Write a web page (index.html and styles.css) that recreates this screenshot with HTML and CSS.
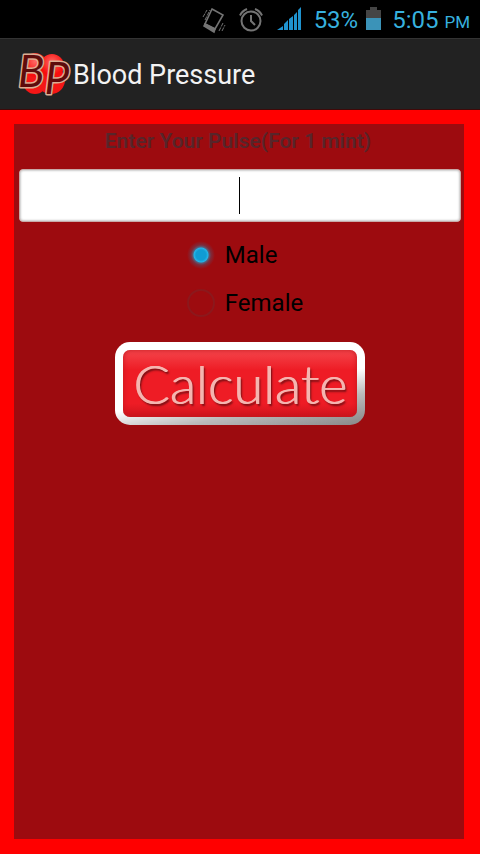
FILE: index.html
```html
<!DOCTYPE html>
<html lang="en">
<head>
  <meta charset="UTF-8">
  <meta name="viewport" content="width=device-width, initial-scale=1.0">
  <title>Blood Pressure</title>
  <link rel="stylesheet" href="styles.css">
</head>
<body>
  <div class="status-bar">
    <svg class="vibrate" width="24" height="28" viewBox="0 0 24 28" fill="none" stroke="#747474" stroke-width="1.6">
      <path d="M10 3 21 9 13 23 3 18z"/>
      <path d="M3 18 13 23 12 26 2 20z" fill="#747474"/>
      <path d="M1 11 5 4M3 14 8 4M17 25 21 17M20 25 23 19" stroke-width="1" stroke-dasharray="4 1"/>
    </svg>
    <svg class="alarm" width="26" height="26" viewBox="0 0 26 26" fill="none" stroke="#747474" stroke-width="2">
      <circle cx="13" cy="14" r="9.500"/>
      <path d="M13 8v6l4 4"/>
      <path d="M2 8.500Q4 4 9 2M17 2q5 2 7 6.500"/>
    </svg>
    <svg class="signal" width="24" height="24" viewBox="0 0 24 24" fill="#1f93cf">
      <path d="M0 23l6-4v4zM7 23v-6l4-4v10zM12 23V12l4-3v14zM17 23V8l3-3v18zM21 23V3l3-3v23z"/>
    </svg>
    <span class="percent">53%</span>
    <svg class="battery" width="16" height="24" viewBox="0 0 16 24">
      <path d="M0 3h4V0h7v3h4v9H0z" fill="#454545"/>
      <path d="M0 11h15v12H0z" fill="#3b93b8"/>
    </svg>
    <span class="time">5:05 <small>PM</small></span>
  </div>

  <header class="action-bar">
    <svg class="logo" width="50" height="50" viewBox="0 0 50 50">
      <defs>
        <radialGradient id="drop" cx="50%" cy="35%">
          <stop offset="0" stop-color="#ff6a64"/>
          <stop offset="1" stop-color="#f80e0e"/>
        </radialGradient>
      </defs>
      <circle cx="17" cy="32" r="12" fill="#f51616"/>
      <circle cx="33" cy="30" r="14" fill="#f51616"/>
      <circle cx="17" cy="15" r="12" fill="url(#drop)"/>
      <circle cx="34" cy="16" r="12" fill="url(#drop)"/>
      <text class="logo-text" x="0" y="37">B<tspan dy="7">P</tspan></text>
    </svg>
    <h1>Blood Pressure</h1>
  </header>

  <main>
    <form class="panel">
      <label class="title" for="pulse">Enter Your Pulse(For 1 mint)</label>
      <div class="field">
        <input type="text" id="pulse" name="pulse" inputmode="numeric">
        <span class="caret"></span>
      </div>
      <div class="options">
        <label><input type="radio" name="gender" value="male" checked>Male</label>
        <label><input type="radio" name="gender" value="female">Female</label>
      </div>
      <button type="button">Calculate</button>
    </form>
  </main>
</body>
</html>
```
FILE: styles.css
```css
* {
  margin: 0;
  padding: 0;
  box-sizing: border-box;
}

body {
  display: flex;
  flex-direction: column;
  min-height: 100vh;
  background: #f00;
  font-family: Roboto, sans-serif;
}

.status-bar {
  display: flex;
  align-items: center;
  justify-content: flex-end;
  height: 38px;
  padding: 2px 10px 0 0;
  background: #000;
  color: #37b1df;
  font-size: 24px;
}

.alarm {
  margin-left: 12px;
}

.signal {
  margin: 0 13px 2px;
}

.battery {
  margin: 0 10px 2px 8px;
}

.time small {
  font-size: 17px;
}

.action-bar {
  display: flex;
  align-items: center;
  height: 72px;
  padding: 2px 0 0 18px;
  gap: 5px;
  background: #222;
  border-top: 1px solid #333;
  border-bottom: 1px solid #400808;
}

.action-bar h1 {
  color: #f3f3f3;
  font-size: 27px;
  font-weight: 400;
}

.logo {
  overflow: visible;
}

.logo-text {
  fill: #5e0b0b;
  stroke: #dcae94;
  stroke-width: 3px;
  stroke-linejoin: round;
  paint-order: stroke;
  font-family: Lato, sans-serif;
  font-size: 44px;
  font-style: italic;
}

main {
  display: flex;
  flex: 1;
  padding: 14px 16px 15px 14px;
}

.panel {
  display: flex;
  flex-direction: column;
  align-items: center;
  flex: 1;
  padding: 0 3px 0 5px;
  background: #9d0b0f;
}

.title {
  height: 45px;
  padding-right: 4px;
  color: #57252a;
  font-size: 21px;
  font-weight: 600;
  line-height: 34px;
}

.field {
  position: relative;
  width: 100%;
}

.field input {
  display: block;
  width: 100%;
  height: 53px;
  border: 1px solid #c8aaa8;
  border-radius: 4px;
  outline: none;
  background: #fff;
  box-shadow: inset 0 0 2px 1px #ccc;
  font: 24px Roboto, sans-serif;
  text-align: center;
}

.caret {
  position: absolute;
  top: 8px;
  left: 50%;
  width: 1px;
  height: 37px;
  margin-left: -1px;
  background: #000;
}

.options {
  margin: 8px 0 16px 10px;
}

.options label {
  display: flex;
  align-items: center;
  height: 48px;
  padding-top: 1px;
  gap: 10px;
  color: #000;
  font-size: 24px;
}

.options input {
  appearance: none;
  width: 28px;
  height: 28px;
  border: 2px solid #8c181c;
  border-radius: 50%;
}

.options input:checked {
  border: none;
  background: radial-gradient(circle, #0f9cd4 0 5px, #25b4e8 7px, #56607c 8px, #7d2c3c 10px, transparent 14px);
}

button {
  width: 250px;
  height: 83px;
  border: 8px solid transparent;
  border-radius: 15px;
  background:
    linear-gradient(#f4464c, #ee1c25 30%, #ee1c25 80%, #cc141c) padding-box,
    linear-gradient(170deg, #fff 55%, #bbb 75%, #888) border-box;
  box-shadow: inset 0 0 5px #c0181f;
  color: #f5b5b0;
  font-family: Lato, sans-serif;
  font-size: 54px;
  font-weight: 300;
  line-height: 60px;
  text-shadow: 1px 0 0 #f5b5b0, 2px 2px 2px #700f13;
}
```
